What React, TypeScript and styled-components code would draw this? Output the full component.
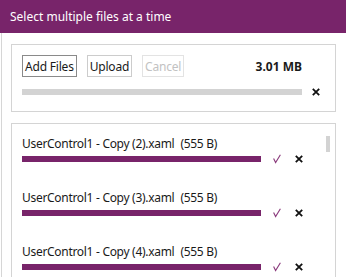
import React from "react";
import styled, { createGlobalStyle } from "styled-components";

const Global = createGlobalStyle`
  html, body { margin: 0; padding: 0; overflow: hidden; background: #fff; }
  body { font-family: "Noto Sans", "Open Sans", sans-serif; color: #1a1a1a; }
`;

const Page = styled.div`
  width: 346px;
  height: 277px;
  display: flex;
  flex-direction: column;
  overflow: hidden;
`;

const Header = styled.div`
  height: 33px;
  background: #78246a;
  color: #fff;
  font-size: 12px;
  display: flex;
  align-items: center;
  padding-left: 10px;
  flex-shrink: 0;
`;

const Body = styled.div`
  flex: 1;
  margin-left: 1px;
  border-left: 1px solid #d6d6d6;
  padding: 11px 10px 0 9px;
  display: flex;
  flex-direction: column;
  gap: 11px;
  min-height: 0;
`;

const Panel = styled.div`
  border: 1px solid #d4d4d4;
  padding: 10px 10px 15px 10px;
  display: grid;
  grid-template-columns: 280px 1fr;
  row-gap: 11px;
  align-items: center;
  flex-shrink: 0;
`;

const ButtonRow = styled.div`
  display: flex;
  align-items: center;
  gap: 10px;
`;

const Btn = styled.button<{ $tone: "focus" | "normal" | "disabled" }>`
  height: 22px;
  padding: 0 2px;
  margin: 0;
  background: #fff;
  font-family: inherit;
  font-size: 12px;
  letter-spacing: -0.2px;
  border: 1px solid
    ${(p) => (p.$tone === "focus" ? "#8a8a8a" : p.$tone === "normal" ? "#cccccc" : "#e3e3e3")};
  color: ${(p) => (p.$tone === "disabled" ? "#c2c2c2" : "#1a1a1a")};
`;

const Size = styled.div`
  margin-left: auto;
  font-weight: 700;
  font-size: 12px;
`;

const Track = styled.div<{ $fill: string }>`
  height: 6px;
  background: ${(p) => p.$fill};
`;

const CloseWrap = styled.div`
  display: flex;
  align-items: center;
  padding-left: 10px;
`;

const ListBox = styled.div`
  flex: 1;
  border: 1px solid #d4d4d4;
  border-bottom: none;
  display: flex;
  padding: 0 5px 0 10px;
  min-height: 0;
  overflow: hidden;
`;

const Items = styled.div`
  flex: 1;
  display: flex;
  flex-direction: column;
  padding-top: 11px;
`;

const Item = styled.div`
  height: 54px;
  flex-shrink: 0;
  display: flex;
  flex-direction: column;
`;

const FileName = styled.div`
  font-size: 12px;
  line-height: 17px;
  height: 19px;
  white-space: pre;
  letter-spacing: -0.3px;
`;

const FileSize = styled.span`
  margin-left: 6px;
`;

const ItemRow = styled.div`
  display: flex;
  align-items: center;
  height: 10px;
`;

const ItemBar = styled(Track)`
  width: 239px;
`;

const Check = styled.svg`
  margin-left: 12px;
`;

const ItemClose = styled.svg`
  margin-left: 14px;
`;

const Scroll = styled.div`
  width: 4px;
  padding-top: 12px;
`;

const Thumb = styled.div`
  height: 16px;
  background: #d3d3d3;
`;

const Cross = () => (
  <svg width="8" height="8" viewBox="0 0 8 8">
    <path d="M0.8 0.8 L7.2 7.2 M7.2 0.8 L0.8 7.2" stroke="#111" strokeWidth="1.8" />
  </svg>
);

const files = [
  "UserControl1 - Copy (2).xaml",
  "UserControl1 - Copy (3).xaml",
  "UserControl1 - Copy (4).xaml",
];

export default function App() {
  return (
    <Page>
      <Global />
      <Header>Select multiple files at a time</Header>
      <Body>
        <Panel>
          <ButtonRow>
            <Btn $tone="focus">Add Files</Btn>
            <Btn $tone="normal">Upload</Btn>
            <Btn $tone="disabled">Cancel</Btn>
            <Size>3.01 MB</Size>
          </ButtonRow>
          <div />
          <Track $fill="#d3d3d3" />
          <CloseWrap>
            <Cross />
          </CloseWrap>
        </Panel>
        <ListBox>
          <Items>
            {files.map((f) => (
              <Item key={f}>
                <FileName>
                  {f}
                  <FileSize>(555 B)</FileSize>
                </FileName>
                <ItemRow>
                  <ItemBar $fill="#78246a" />
                  <Check width="8" height="10" viewBox="0 0 8 10">
                    <path d="M0.6 4.5 L2.6 8.6 L7.4 0.8" stroke="#8a3a7c" strokeWidth="1.1" fill="none" />
                  </Check>
                  <ItemClose width="8" height="8" viewBox="0 0 8 8">
                    <path d="M0.8 0.8 L7.2 7.2 M7.2 0.8 L0.8 7.2" stroke="#111" strokeWidth="1.8" />
                  </ItemClose>
                </ItemRow>
              </Item>
            ))}
          </Items>
          <Scroll>
            <Thumb />
          </Scroll>
        </ListBox>
      </Body>
    </Page>
  );
}
